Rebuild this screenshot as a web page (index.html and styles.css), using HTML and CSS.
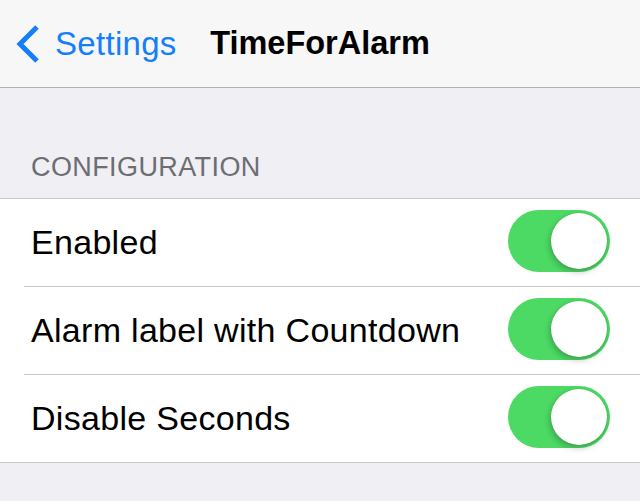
FILE: index.html
```html
<!DOCTYPE html>
<html>
<head>
<meta charset="utf-8">
<link rel="stylesheet" href="styles.css">
</head>
<body>
<div class="nav">
  <div class="back">
    <svg class="chev" width="26" height="40" viewBox="0 0 26 40"><path d="M22 3 L5 20 L22 37" fill="none" stroke="#157efb" stroke-width="5"/></svg>
    <span class="back-label">Settings</span>
  </div>
  <div class="title">TimeForAlarm</div>
</div>
<div class="content">
  <div class="section-header">CONFIGURATION</div>
  <div class="group">
    <div class="row"><span class="label">Enabled</span><span class="toggle"><span class="knob"></span></span></div>
    <div class="row"><span class="label">Alarm label with Countdown</span><span class="toggle"><span class="knob"></span></span></div>
    <div class="row"><span class="label">Disable Seconds</span><span class="toggle"><span class="knob"></span></span></div>
  </div>
</div>
</body>
</html>
```
FILE: styles.css
```css
html, body {
  margin: 0;
  padding: 0;
  background: #efeff4;
  font-family: "Liberation Sans", Arial, sans-serif;
  width: 640px;
  height: 501px;
  overflow: hidden;
}
.nav {
  height: 88px;
  background: #f7f7f7;
  border-bottom: 1px solid #b2b2b2;
  box-sizing: border-box;
  position: relative;
  display: flex;
  align-items: center;
}
.back {
  display: flex;
  align-items: center;
  padding-left: 15px;
  color: #157efb;
}
.chev { margin-right: 14px; }
.back-label { font-size: 33px; letter-spacing: 0.3px; }
.title {
  position: absolute;
  left: 0;
  right: 0;
  text-align: center;
  font-size: 32.5px;
  font-weight: bold;
  color: #000;
  pointer-events: none;
}
.content { padding-top: 64px; }
.section-header {
  padding-left: 31px;
  font-size: 27px;
  letter-spacing: 0.4px;
  color: #6d6d72;
  line-height: 30px;
  padding-bottom: 16px;
}
.group {
  background: #fff;
  border-top: 1px solid #c8c7cc;
  border-bottom: 1px solid #c8c7cc;
}
.row {
  height: 87px;
  display: flex;
  align-items: center;
  justify-content: space-between;
  padding: 0 30px 0 31px;
}
.row + .row { border-top: 1px solid #c8c7cc; margin-left: 24px; padding-left: 7px; }
.label { font-size: 34px; letter-spacing: 0.3px; color: #000; }
.toggle {
  width: 102px;
  height: 62px;
  border-radius: 31px;
  background: #4cd964;
  position: relative;
  margin-bottom: 3px;
}
.knob {
  position: absolute;
  right: 3px;
  top: 3px;
  width: 56px;
  height: 56px;
  border-radius: 50%;
  background: #fff;
  box-shadow: -1px 3px 6px rgba(0,0,0,0.25), 0 0 1px rgba(0,0,0,0.2);
}
```
